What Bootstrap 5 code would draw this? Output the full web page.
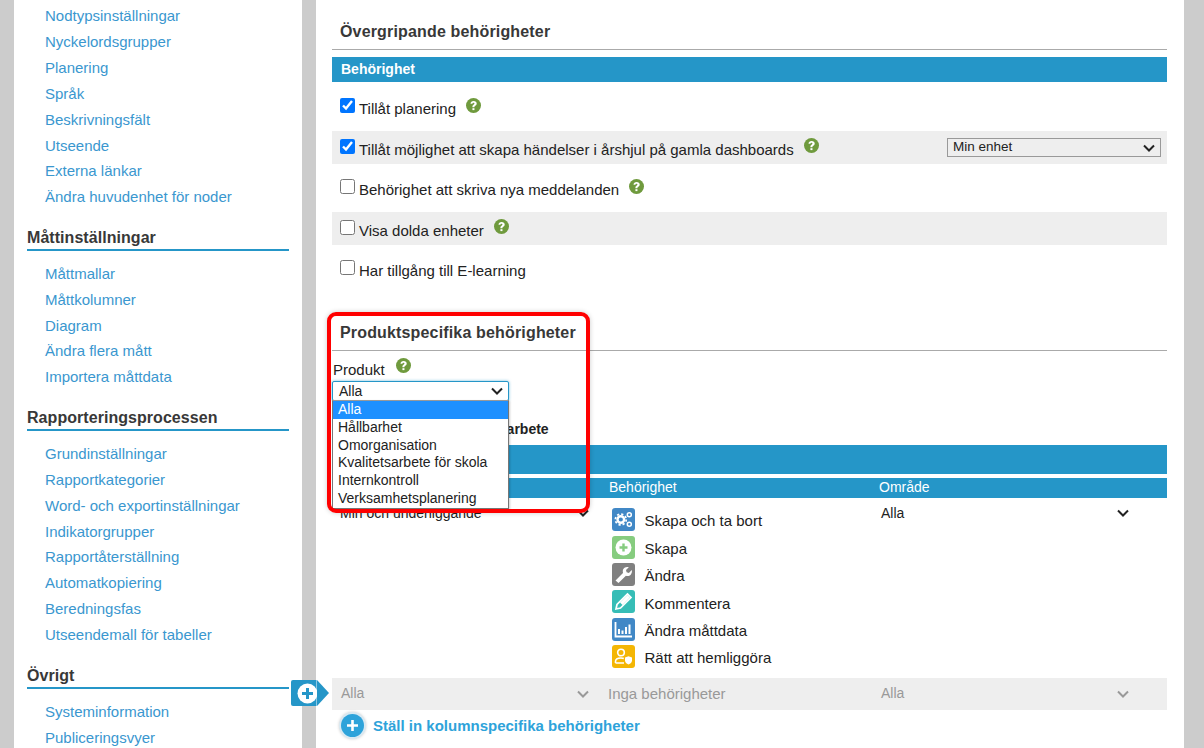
<!doctype html>
<html lang="sv"><head><meta charset="utf-8">
<title>Behörigheter</title>
<link href="https://cdn.jsdelivr.net/npm/bootstrap@5.3.0/dist/css/bootstrap.min.css" rel="stylesheet">
<style>
html,body{height:748px;overflow:hidden}
body{background:#ccc;font-family:"Liberation Sans",Arial,sans-serif;font-size:14px;color:#222}
.shell{height:748px;padding:0 20px 0 14px;overflow:hidden;position:relative}
.side{width:288px;background:#fff;padding:3.3px 13px 0 13px;height:748px;flex:none;overflow:hidden}
.side-h{font-size:16px;font-weight:700;color:#383838;border-bottom:2px solid #2596c8;line-height:20px;padding-bottom:1px;margin:0 0 10px;letter-spacing:.05px}
.side-h:not(:first-child){margin-top:17.9px}
.side a{display:block;padding-left:18px;color:#3a97cf;text-decoration:none;line-height:25.85px;font-size:15px}
.mainp{margin-left:14px;background:#fff;flex:1;padding:0 17px 0 16px;height:748px;position:relative}
.sec-h{font-size:16px;font-weight:700;color:#383838;padding:22px 8px 7px;line-height:20px;border-bottom:1px solid #aaa;margin:0;letter-spacing:.16px}
.bar{background:#2596c8;color:#fff;font-weight:700;height:25px;line-height:25px;padding-left:9px;margin-top:7px;font-size:14px}
.perm{height:33px;padding-left:7.5px;margin-bottom:7.5px;display:flex;align-items:center;font-size:15px}
.perm:nth-child(even){background:#eee}
.perm input{width:15px;height:15px;margin:0 4.5px 2px 0;accent-color:#0075ff}
.perm-t{padding-top:6px}
.q{display:inline-block;margin:0 0 3px 10px;width:15px;height:15px;flex:none}
.perm-sel{margin-left:auto;margin-right:6px;width:214px;height:19px;font-size:13.5px;border:1px solid #999;padding:1px 5px 0;display:flex;justify-content:space-between;align-items:center;color:#222}
.prod-h{padding-top:0;margin-top:38px;padding-bottom:7px}
.lab{margin-top:7px;font-size:15px;line-height:22px;height:23px;padding-left:1px}
.lab .q{vertical-align:-1px;margin-left:11px}
.fake-sel{width:177px;height:20px;border:1px solid #2596c8;box-shadow:0 0 3px #2596c8aa;display:flex;justify-content:space-between;align-items:center;padding:0 5px 0 6px;font-size:14px;border-radius:2px;background:#fff}
.hidden-t{font-weight:700;font-size:14px;padding-left:5px;margin-top:18px;line-height:20px;height:20px}
.bar2{background:#2596c8;height:29px;margin-top:6px}
.hdr{background:#2596c8;color:#fff;height:20px;line-height:19px;margin-top:4px;font-size:14px;display:grid;grid-template-columns:277px 270px 1fr}
.grid3{display:grid;grid-template-columns:277px 270px 1fr}
.pad{padding-left:8px}
.cell-sel{display:flex;justify-content:space-between;align-items:center;padding-right:38px;height:30px;font-size:14px}
.cell-l{padding-right:20px}
.cell-a{padding-left:2px}
.ic-row{display:flex;align-items:center;height:27.4px;font-size:15px;padding-left:3px}
.ic-row span+span{padding-top:4px}
.ic{width:23px;height:23px;border-radius:3px;margin-right:9.5px;flex:none;display:flex;align-items:center;justify-content:center}
.bg1,.bg5{background:#4188c6}
.bg2{background:#86cc7f}
.bg3{background:#808080}
.bg4{background:#36bdb6}
.bg6{background:#f4b604}
.ic-list{padding-top:8px;margin-bottom:7.6px}
.graybar{background:#eee;color:#999;height:32px;font-size:14px;align-items:center}
.graybar .cell-sel{height:32px}
.graybar .pad{padding-left:9px}
.graybar-t{font-size:15px;margin-left:-1px}
.add{display:flex;align-items:center;gap:9px;padding-left:9px;height:32px;font-weight:700;color:#2ea3da;font-size:15px}
.add-c{width:23px;height:23px;border-radius:50%;background:#2ea3da;box-shadow:0 0 0 2px #d9e9f2,0 0 3px 2px #ccc;display:flex;align-items:center;justify-content:center}
.toggle{position:absolute;left:291px;top:680px;display:flex;align-items:center;z-index:5}
.toggle-b{width:25px;height:26px;background:#2596c8;border-radius:2px 0 0 2px;display:flex;align-items:center;justify-content:flex-end;border-right:1px solid #8cc8e4;box-sizing:content-box}
.toggle-b svg{margin-right:-1.5px;flex:none}
.toggle-t{width:0;height:0;border-left:12px solid #2596c8;border-top:13px solid transparent;border-bottom:13px solid transparent}
.dd{position:absolute;left:332px;top:400px;width:177px;height:109px;background:#fff;border:1px solid #767676;border-top-color:#999;z-index:3;font-size:14px;line-height:17.8px;box-shadow:1px 1px 2px #0003;overflow:hidden}
.dd div{padding-left:5px}
.dd .on{background:#1e90ff;color:#fff}
.redbox{position:absolute;left:327px;top:312px;width:263px;height:201px;border:4px solid #f00;border-radius:9px;box-shadow:0 0 5px #0003;z-index:4;pointer-events:none}
.cv{flex:none}
</style></head><body>
<svg width="0" height="0" class="position-absolute"><defs>
<symbol id="q" viewBox="0 0 14 14"><circle cx="7" cy="7" r="7" fill="#6f9a3d"/><path d="M4.2 5.300C4.300 3.700 5.500 2.800 7.100 2.800c1.700 0 2.900 1 2.900 2.300 0 1.100-.7 1.700-1.400 2.200-.5.3-.7.600-.7 1.100v.2H6v-.5c0-.9.300-1.300 1-1.800.6-.4.900-.7.900-1.100 0-.5-.3-.8-.9-.8s-.9.300-1 1z" fill="#fff"/><rect x="6" y="9.500" width="1.900" height="1.800" fill="#fff"/></symbol>
<symbol id="cvd" viewBox="0 0 12 8"><path d="M1 1.500l5 5 5-5" fill="none" stroke="currentColor" stroke-width="2"/></symbol>
</defs></svg>
<div class="shell d-flex">
<nav class="side">
<a href="#">Nodtypsinställningar</a><a href="#">Nyckelordsgrupper</a><a href="#">Planering</a><a href="#">Språk</a><a href="#">Beskrivningsfält</a><a href="#">Utseende</a><a href="#">Externa länkar</a><a href="#">Ändra huvudenhet för noder</a>
<h2 class="side-h">Måttinställningar</h2>
<a href="#">Måttmallar</a><a href="#">Måttkolumner</a><a href="#">Diagram</a><a href="#">Ändra flera mått</a><a href="#">Importera måttdata</a>
<h2 class="side-h">Rapporteringsprocessen</h2>
<a href="#">Grundinställningar</a><a href="#">Rapportkategorier</a><a href="#">Word- och exportinställningar</a><a href="#">Indikatorgrupper</a><a href="#">Rapportåterställning</a><a href="#">Automatkopiering</a><a href="#">Beredningsfas</a><a href="#">Utseendemall för tabeller</a>
<h2 class="side-h">Övrigt</h2>
<a href="#">Systeminformation</a><a href="#">Publiceringsvyer</a>
</nav>
<main class="mainp">
<h2 class="sec-h">Övergripande behörigheter</h2>
<div class="bar">Behörighet</div>
<div class="mt-2">
<div class="perm"><input type="checkbox" checked aria-label="Tillåt planering"><span class="perm-t">Tillåt planering</span><svg class="q"><use href="#q"/></svg></div>
<div class="perm"><input type="checkbox" checked aria-label="Tillåt årshjul"><span class="perm-t">Tillåt möjlighet att skapa händelser i årshjul på gamla dashboards</span><svg class="q"><use href="#q"/></svg><span class="perm-sel">Min enhet<svg class="cv" width="12" height="8"><use href="#cvd"/></svg></span></div>
<div class="perm"><input type="checkbox" aria-label="Nya meddelanden"><span class="perm-t">Behörighet att skriva nya meddelanden</span><svg class="q"><use href="#q"/></svg></div>
<div class="perm"><input type="checkbox" aria-label="Dolda enheter"><span class="perm-t">Visa dolda enheter</span><svg class="q"><use href="#q"/></svg></div>
<div class="perm"><input type="checkbox" aria-label="E-learning"><span class="perm-t">Har tillgång till E-learning</span></div>
</div>
<h2 class="sec-h prod-h">Produktspecifika behörigheter</h2>
<div class="lab">Produkt<svg class="q"><use href="#q"/></svg></div>
<div class="fake-sel">Alla<svg class="cv" width="12" height="8"><use href="#cvd"/></svg></div>
<div class="hidden-t">Behörigheter för kvalitetsarbete</div>
<div class="bar2"></div>
<div class="hdr"><span class="pad">Visa</span><span>Behörighet</span><span>Område</span></div>
<div class="grid3">
<div class="cell-sel pad cell-l"><span>Min och underliggande</span><svg class="cv" width="12" height="8"><use href="#cvd"/></svg></div>
<div class="ic-list">
<div class="ic-row"><span class="ic bg1"><svg width="19" height="17" viewBox="0 0 19 17"><circle cx="6.800" cy="8.500" r="3.300" fill="none" stroke="#fff" stroke-width="2.400"/><circle cx="6.800" cy="8.500" r="5.400" fill="none" stroke="#fff" stroke-width="1.800" stroke-dasharray="2.200 2"/><circle cx="15.300" cy="3.800" r="2" fill="none" stroke="#fff" stroke-width="1.500"/><circle cx="15.300" cy="13.200" r="2" fill="none" stroke="#fff" stroke-width="1.500"/></svg></span><span>Skapa och ta bort</span></div>
<div class="ic-row"><span class="ic bg2"><svg width="17" height="17" viewBox="0 0 17 17"><circle cx="8.500" cy="8.500" r="8" fill="#fff"/><path d="M8.500 4.500v8M4.500 8.500h8" stroke="#86cc7f" stroke-width="2.400"/></svg></span><span>Skapa</span></div>
<div class="ic-row"><span class="ic bg3"><svg width="19" height="19" viewBox="0 0 19 19"><path d="M1.500 15.500l7.500-7.600C8.400 5.600 9 3.900 10.500 2.800c1.300-.9 2.900-1.100 4.300-.6L12 5l.6 2.300 2.300.6 2.800-2.800c.5 1.400.2 3.100-.8 4.300-1.200 1.400-2.900 1.900-5 1.400L4.500 18z" fill="#fff"/></svg></span><span>Ändra</span></div>
<div class="ic-row"><span class="ic bg4"><svg width="19" height="19" viewBox="0 0 19 19"><path d="M2 17l1-4.500L13.500 2l3.500 3.500L6.500 16z" fill="none" stroke="#fff" stroke-width="1.700"/><path d="M6 10.500l7.500-7.500 2.500 2.500-7.500 7.500z" fill="#fff"/></svg></span><span>Kommentera</span></div>
<div class="ic-row"><span class="ic bg5"><svg width="19" height="17" viewBox="0 0 19 17"><path d="M1.500 1v14.500H18" fill="none" stroke="#fff" stroke-width="1.800"/><path d="M5 8v5M8.500 9.500V13M12 6v7M15.500 3.500V13" stroke="#fff" stroke-width="2"/></svg></span><span>Ändra måttdata</span></div>
<div class="ic-row"><span class="ic bg6"><svg width="20" height="19" viewBox="0 0 20 19"><circle cx="7" cy="5.500" r="3.300" fill="none" stroke="#fff" stroke-width="1.600"/><path d="M1.500 16v-1.500c0-2 2-3.500 5.500-3.500 1 0 2 .1 2.800.4M1.500 16H10" fill="none" stroke="#fff" stroke-width="1.600"/><path d="M11 10.500l3.500-1.200 3.500 1.200v3c0 2-1.500 3.300-3.500 4-2-.7-3.500-2-3.500-4z" fill="#fff"/></svg></span><span>Rätt att hemliggöra</span></div>
</div>
<div class="cell-sel"><span class="cell-a">Alla</span><svg class="cv" width="12" height="8"><use href="#cvd"/></svg></div>
</div>
<div class="grid3 graybar">
<div class="cell-sel pad cell-l"><span>Alla</span><svg class="cv" width="12" height="8"><use href="#cvd"/></svg></div>
<div class="graybar-t">Inga behörigheter</div>
<div class="cell-sel"><span class="cell-a">Alla</span><svg class="cv" width="12" height="8"><use href="#cvd"/></svg></div>
</div>
<div class="add"><span class="add-c"><svg width="13" height="13" viewBox="0 0 13 13"><path d="M6.500 1v11M1 6.500h11" stroke="#fff" stroke-width="2.600"/></svg></span>Ställ in kolumnspecifika behörigheter</div>
</main>
</div>
<div class="toggle"><span class="toggle-b"><svg width="21" height="21" viewBox="0 0 21 21"><circle cx="10.500" cy="10.500" r="10" fill="#fff"/><path d="M10.500 5v11M5 10.500h11" stroke="#2596c8" stroke-width="3"/></svg></span><span class="toggle-t"></span></div>
<div class="dd"><div class="on">Alla</div><div>Hållbarhet</div><div>Omorganisation</div><div>Kvalitetsarbete för skola</div><div>Internkontroll</div><div>Verksamhetsplanering</div></div>
<div class="redbox"></div>
</body></html>
